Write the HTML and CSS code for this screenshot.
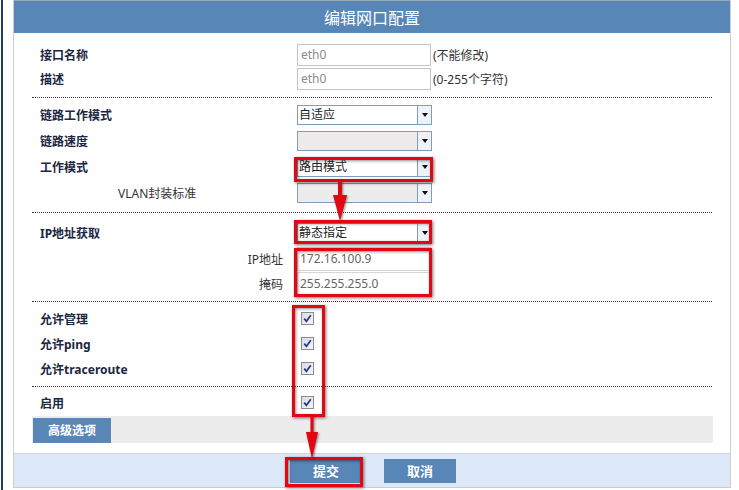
FILE: index.html
```html
<!DOCTYPE html>
<html lang="zh">
<head>
<meta charset="utf-8">
<title>编辑网口配置</title>
<link rel="stylesheet" href="styles.css">
</head>
<body>
<div class="page">
  <div class="edge"></div>
  <div class="dialog">
    <div class="title">编辑网口配置</div>

    <div class="section s1">
      <div class="row r24"><div class="label b">接口名称</div><div class="ctl"><span class="input">eth0</span><span class="hint">(不能修改)</span></div></div>
      <div class="row r24"><div class="label b">描述</div><div class="ctl"><span class="input">eth0</span><span class="hint">(0-255个字符)</span></div></div>
    </div>

    <div class="section s2">
      <div class="row r26"><div class="label b">链路工作模式</div><div class="ctl"><div class="select"><span class="val">自适应</span><span class="btn"><i class="tri"></i></span></div></div></div>
      <div class="row r26"><div class="label b">链路速度</div><div class="ctl"><div class="select dis"><span class="val"></span><span class="btn"><i class="tri"></i></span></div></div></div>
      <div class="row r26"><div class="label b">工作模式</div><div class="ctl"><div class="select"><span class="val">路由模式</span><span class="btn"><i class="tri"></i></span></div></div></div>
      <div class="row r26"><div class="label sub">VLAN封装标准</div><div class="ctl"><div class="select dis"><span class="val"></span><span class="btn"><i class="tri"></i></span></div></div></div>
    </div>

    <div class="section s3">
      <div class="row r26"><div class="label b">IP地址获取</div><div class="ctl"><div class="select"><span class="val">静态指定</span><span class="btn"><i class="tri"></i></span></div></div></div>
      <div class="row r25"><div class="label right">IP地址</div><div class="ctl"><span class="input ip">172.16.100.9</span></div></div>
      <div class="row r25"><div class="label right">掩码</div><div class="ctl"><span class="input ip">255.255.255.0</span></div></div>
    </div>

    <div class="section s4">
      <div class="row r25"><div class="label b">允许管理</div><div class="ctl"><span class="check"><svg width="11" height="11" viewBox="0 0 11 11"><path d="M2.2 5.6 L4.4 8.3 L8.8 2.2" fill="none" stroke="#26398a" stroke-width="1.7"/></svg></span></div></div>
      <div class="row r25"><div class="label b">允许ping</div><div class="ctl"><span class="check"><svg width="11" height="11" viewBox="0 0 11 11"><path d="M2.2 5.6 L4.4 8.3 L8.8 2.2" fill="none" stroke="#26398a" stroke-width="1.7"/></svg></span></div></div>
      <div class="row r25"><div class="label b">允许traceroute</div><div class="ctl"><span class="check"><svg width="11" height="11" viewBox="0 0 11 11"><path d="M2.2 5.6 L4.4 8.3 L8.8 2.2" fill="none" stroke="#26398a" stroke-width="1.7"/></svg></span></div></div>
    </div>

    <div class="section s5">
      <div class="row r25"><div class="label b">启用</div><div class="ctl"><span class="check"><svg width="11" height="11" viewBox="0 0 11 11"><path d="M2.2 5.6 L4.4 8.3 L8.8 2.2" fill="none" stroke="#26398a" stroke-width="1.7"/></svg></span></div></div>
    </div>

    <div class="advbar"><span class="advbtn">高级选项</span></div>

    <div class="footer">
      <span class="fbtn">提交</span>
      <span class="fbtn">取消</span>
    </div>
  </div>

  <div class="mark m1"></div>
  <div class="mark m2"></div>
  <div class="mark m3"></div>
  <div class="mark m4"></div>
  <div class="mark m5"></div>

  <svg class="arrow a1" width="16" height="42" viewBox="0 0 16 42"><rect x="6" y="0" width="4" height="18" fill="#e30613"/><polygon points="1,14 15,14 8,40" fill="#e30613"/></svg>
  <svg class="arrow a2" width="14" height="44" viewBox="0 0 14 44"><rect x="5.5" y="0" width="3" height="20" fill="#e30613"/><polygon points="1,16 13,16 7,43" fill="#e30613"/></svg>
</div>
</body>
</html>
```

FILE: styles.css
```css
html, body {
  margin: 0;
  padding: 0;
  background: #ffffff;
}
body {
  font-family: "Noto Sans", "Noto Sans CJK SC", sans-serif;
  font-size: 12px;
  color: #333;
}
.page {
  position: relative;
  width: 739px;
  height: 490px;
  display: flex;
  align-items: flex-start;
  overflow: hidden;
}
.edge {
  width: 2px;
  height: 490px;
  margin-left: 1px;
  background: #1f3d63;
  flex: none;
}
.dialog {
  margin-left: 10px;
  width: 718px;
  box-sizing: border-box;
  border-left: 1px solid #cfcfcf;
  border-right: 1px solid #cfcfcf;
  flex: none;
}
.title {
  height: 33px;
  line-height: 33px;
  background: #5886b6;
  color: #fff;
  text-align: center;
  font-size: 16px;
  font-family: "Noto Sans CJK SC", sans-serif;
  border-top: 1px solid #9aa9b8;
  box-sizing: border-box;
}
.section {
  margin: 0 18px;
  border-bottom: 1px dotted #3a3a3a;
}
.s1 { padding: 10px 0 6px; }
.s2 { padding: 4px 0 6px; }
.s3 { padding: 7px 0 5px; }
.s4 { padding: 4px 0 5px; }
.s5 { padding: 3px 0 0; border-bottom: none; }
.row {
  display: grid;
  grid-template-columns: 265px 1fr;
  align-items: center;
}
.r24 { height: 24px; }
.r25 { height: 25px; }
.r26 { height: 26px; }
.label {
  padding-left: 8px;
  color: #333;
  white-space: nowrap;
}
.label.b {
  font-weight: bold;
  color: #1b2743;
}
.label.sub { padding-left: 86px; }
.label.right { text-align: right; padding: 0 14px 0 0; }
.ctl {
  display: flex;
  align-items: center;
  gap: 2px;
}
.input {
  width: 134px;
  height: 22px;
  box-sizing: border-box;
  border: 1px solid #c4c4c4;
  padding-left: 3px;
  line-height: 20px;
  color: #8a8a8a;
  background: #fff;
}
.input.ip {
  height: 24px;
  line-height: 22px;
  border-color: #d6d6d6;
  padding-left: 2px;
  color: #666;
}
.hint { color: #333; }
.select {
  width: 135px;
  height: 20px;
  box-sizing: border-box;
  border: 1px solid #7f9db9;
  display: flex;
  background: #fff;
}
.select.dis { background: #ececec; }
.select .val {
  flex: 1;
  line-height: 18px;
  padding-left: 1px;
  color: #222;
}
.select .btn {
  width: 13px;
  border-left: 1px solid #7f9db9;
  background: #eef3fa;
  display: flex;
  align-items: center;
  justify-content: center;
}
.tri {
  width: 0;
  height: 0;
  border-left: 3.5px solid transparent;
  border-right: 3.5px solid transparent;
  border-top: 4px solid #111;
}
.check {
  margin-left: 4px;
  width: 13px;
  height: 13px;
  box-sizing: border-box;
  border: 1px solid #8c8c8c;
  background: linear-gradient(135deg, #d9dce3, #f4f5f7);
  display: flex;
}
.advbar {
  margin: 1px 17px 10px 18px;
  height: 27px;
  background: #ececec;
  padding: 2px 0 0 1px;
  box-sizing: border-box;
}
.advbtn {
  display: block;
  width: 78px;
  height: 25px;
  line-height: 25px;
  text-align: center;
  background: #5886b6;
  color: #fff;
  font-weight: bold;
}
.footer {
  height: 35px;
  box-sizing: border-box;
  border-top: 1px solid #c9d5e3;
  border-bottom: 1px solid #cccccc;
  background: #dde9f8;
  display: flex;
  justify-content: center;
  align-items: center;
  gap: 22px;
  padding-left: 2px;
}
.fbtn {
  width: 72px;
  height: 24px;
  line-height: 24px;
  text-align: center;
  background: #5886b6;
  color: #fff;
  font-weight: bold;
  font-size: 13px;
}
.mark {
  position: absolute;
  box-sizing: border-box;
  border: 3px solid #e30613;
  box-shadow: 1px 1px 3px rgba(0,0,0,0.55), inset 1px 1px 3px rgba(0,0,0,0.45);
}
.m1 { left: 294px; top: 157px; width: 139px; height: 25px; }
.m2 { left: 294px; top: 220px; width: 138px; height: 24px; }
.m3 { left: 294px; top: 248px; width: 138px; height: 49px; }
.m4 { left: 292px; top: 305px; width: 33px; height: 112px; }
.m5 { left: 285px; top: 457px; width: 78px; height: 30px; }
.arrow {
  position: absolute;
  filter: drop-shadow(1px 1px 1px rgba(0,0,0,0.45));
}
.a1 { left: 332px; top: 181px; }
.a2 { left: 305px; top: 416px; }
```
